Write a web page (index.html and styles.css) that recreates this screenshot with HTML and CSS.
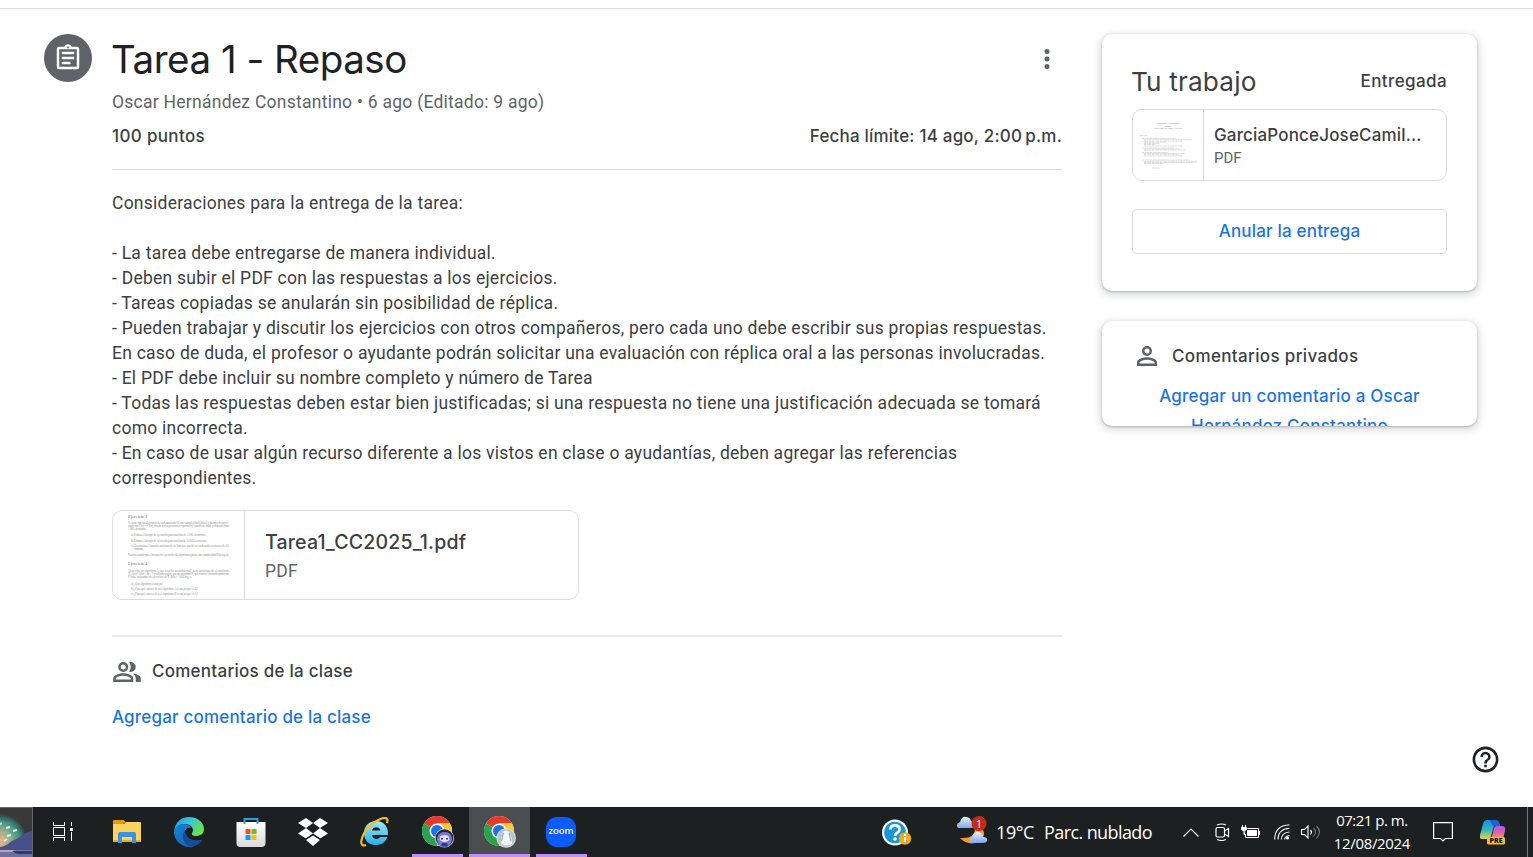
FILE: index.html
```html
<!DOCTYPE html>
<html lang="es">
<head>
<meta charset="utf-8">
<title>Tarea 1 - Repaso</title>
<link rel="stylesheet" href="styles.css">
</head>
<body>
<div class="page">
  <div class="topline"></div>
  <main class="assignment">
    <div class="badge"><svg width="30" height="30" viewBox="0 0 24 24" fill="#fff"><path d="M7 15h7v2H7zm0-4h10v2H7zm0-4h10v2H7zm12-4h-4.180C14.400 1.840 13.300 1 12 1s-2.400.840-2.820 2H5a2 2 0 0 0-2 2v14a2 2 0 0 0 2 2h14a2 2 0 0 0 2-2V5a2 2 0 0 0-2-2zm-7-.250a.750.750 0 0 1 0 1.500.750.750 0 0 1 0-1.500zM19 19H5V5h14v14z"/></svg></div>
    <article class="content">
      <header class="head">
        <h1 class="title">Tarea 1 - Repaso</h1>
        <svg class="more" width="30" height="30" viewBox="0 0 24 24" fill="#5f6368"><path d="M12 8a2 2 0 1 0 0-4 2 2 0 0 0 0 4zm0 2a2 2 0 1 0 0 4 2 2 0 0 0 0-4zm0 6a2 2 0 1 0 0 4 2 2 0 0 0 0-4z"/></svg>
      </header>
      <div class="byline">Oscar Hernández Constantino • 6 ago (Editado: 9 ago)</div>
      <div class="facts"><span class="points">100 puntos</span><span class="due">Fecha límite: 14 ago, 2:00&#8239;p.m.</span></div>
      <div class="description">Consideraciones para la entrega de la tarea:<br><br>- La tarea debe entregarse de manera individual.<br>- Deben subir el PDF con las respuestas a los ejercicios.<br>- Tareas copiadas se anularán sin posibilidad de réplica.<br>- Pueden trabajar y discutir los ejercicios con otros compañeros, pero cada uno debe escribir sus propias respuestas.<br>En caso de duda, el profesor o ayudante podrán solicitar una evaluación con réplica oral a las personas involucradas.<br>- El PDF debe incluir su nombre completo y número de Tarea<br>- Todas las respuestas deben estar bien justificadas; si una respuesta no tiene una justificación adecuada se tomará<br>como incorrecta.<br>- En caso de usar algún recurso diferente a los vistos en clase o ayudantías, deben agregar las referencias<br>correspondientes.</div>
      <div class="file">
        <svg class="thumb" width="131" height="88" viewBox="0 0 131 88">
          <g class="thumb-text">
            <text class="thumb-bold" x="15" y="6.500" textLength="19">Ejercicio 3</text>
            <text x="15" y="13" textLength="101">Se tiene una un algoritmo de ordenamiento O con complejidad O(f(n)) y tiempo de proce-</text>
            <text x="15" y="16" textLength="101">samiento T(n) = c f(n), donde f(n) representa la operación, cuando se mide y ordenar listas</text>
            <text x="15" y="19" textLength="18">1 000 elementos.</text>
            <text x="18" y="25.200" textLength="75">a) Estima el tiempo de ejecución para una lista de 5 000 elementos.</text>
            <text x="18" y="30.500" textLength="76">b) Estima el tiempo de ejecución para una lista de 10 000 elementos.</text>
            <text x="18" y="35.500" textLength="98">c) Determina el tamaño máximo de la lista que puede ser ordenada en menos de 60</text>
            <text x="21.500" y="38.800" textLength="9">minutos.</text>
            <text x="15" y="44.500" textLength="101">Puedes asumir que el tiempo de ejecución del algoritmo g tiene una complejidad O(n log n).</text>
            <text class="thumb-bold" x="15" y="54" textLength="19">Ejercicio 4</text>
            <text x="15" y="60.500" textLength="101">Tienes que un algoritmo A, que resuelve un problema P, tiene un tiempo de ejecución de</text>
            <text x="15" y="63.500" textLength="101">T_A(n) = 10n² + 5n + 2 y además sugiere que un algoritmo B, que resuelve el mismo problema</text>
            <text x="15" y="66.500" textLength="64">P, tiene un tiempo de ejecución de T_B(n) = 50 n log₂ n.</text>
            <text x="18" y="73.500" textLength="32">a) ¿Qué algoritmo es mejor?</text>
            <text x="18" y="78.800" textLength="67">b) ¿Para qué valores de n el algoritmo A es mejor que el B?</text>
            <text x="18" y="84.200" textLength="67">c) ¿Para qué valores de n el algoritmo B es mejor que el A?</text>
          </g>
        </svg>
        <div class="file-info"><div class="file-name">Tarea1_CC2025_1.pdf</div><div class="file-type">PDF</div></div>
      </div>
      <section class="comments">
        <div class="comments-head">
          <svg class="people" width="30" height="30" viewBox="0 0 24 24" fill="#5f6368"><path d="M15 8c0-1.420-.5-2.730-1.330-3.760.42-.14.86-.24 1.330-.24a4 4 0 0 1 0 8c-.43 0-.84-.09-1.230-.21l-.1-.03A5.980 5.980 0 0 0 15 8zm1.660 5.130C18.030 14.060 19 15.320 19 17v3h4v-3c0-2.180-3.580-3.470-6.340-3.870zM9 6a2 2 0 1 0 0 4 2 2 0 0 0 0-4m0-2a4 4 0 1 1 0 8 4 4 0 0 1 0-8zm0 11c-2.690 0-5.770 1.280-6 2.010V18h12v-.99c-.2-.72-3.300-2.010-6-2.010m0-2c2.670 0 8 1.340 8 4v3H1v-3c0-2.660 5.330-4 8-4z"/></svg>
          <h2 class="comments-title">Comentarios de la clase</h2>
        </div>
        <a class="link">Agregar comentario de la clase</a>
      </section>
    </article>
    <aside class="side">
      <section class="card work">
        <div class="work-head"><h2 class="work-title">Tu trabajo</h2><span class="status">Entregada</span></div>
        <div class="upload">
          <svg class="thumb" width="70" height="70" viewBox="0 0 70 70">
            <g class="thumb-text thumb-head" text-anchor="middle">
              <text x="35" y="13.500" textLength="22">Complejidad Computacional</text>
              <text class="thumb-bold" x="35" y="16.700" textLength="7">Tarea 1</text>
              <text x="35" y="19.400" textLength="28">García Ponce José Camilo 319210536</text>
            </g>
            <g class="thumb-lines" fill="none">
              <path d="M7 25.500h7M9 28.500h34M11 29.700h48M11 31.200h39M11 32.200h22M11 33.500h16M11 34.500h12M11 36h39M9 38h31M11 39h36M11 40h41"/>
              <path d="M9 42.500h26M11 43.500h41M11 44.700h36M11 46h39M9 50h46M11 51.300h53M11 52.500h52M11 53.500h20M19 58h8"/>
            </g>
          </svg>
          <div class="upload-info"><div class="upload-name">GarciaPonceJoseCamil...</div><div class="upload-type">PDF</div></div>
        </div>
        <button class="undo">Anular la entrega</button>
      </section>
      <section class="card private">
        <div class="private-head">
          <svg class="person" width="30" height="30" viewBox="0 0 24 24" fill="#5f6368"><path d="M12 6a2 2 0 1 1 0 4 2 2 0 0 1 0-4m0 9c2.700 0 5.800 1.290 6 2v1H6v-.99c.2-.72 3.300-2.010 6-2.010m0-11a4 4 0 1 0 0 8 4 4 0 0 0 0-8zm0 9c-2.670 0-8 1.340-8 4v3h16v-3c0-2.660-5.330-4-8-4z"/></svg>
          <h2 class="private-title">Comentarios privados</h2>
        </div>
        <a class="private-link">Agregar un comentario a Oscar<br>Hernández Constantino</a>
      </section>
    </aside>
  </main>
  <svg class="help" width="31" height="31" viewBox="0 0 24 24" fill="#202124"><path d="M11 18h2v-2h-2v2zm1-16a10 10 0 1 0 0 20 10 10 0 0 0 0-20zm0 18a8 8 0 1 1 0-16 8 8 0 0 1 0 16zm0-14a4 4 0 0 0-4 4h2a2 2 0 1 1 4 0c0 2-3 1.750-3 5h2c0-2.250 3-2.500 3-5a4 4 0 0 0-4-4z"/></svg>
</div>
<footer class="taskbar">
  <svg class="search-art" width="33" height="50" viewBox="0 0 33 50">
    <defs><radialGradient id="sky" cx="0" cy="34" r="27" gradientUnits="userSpaceOnUse"><stop offset="0" stop-color="#ffb08a"/><stop offset=".4" stop-color="#8fb08e"/><stop offset=".75" stop-color="#3b8e80"/><stop offset="1" stop-color="#373b3b"/></radialGradient></defs>
    <path fill="#383838" d="M0 0h33v50H0z"/><circle cx="0" cy="32" r="26" fill="url(#sky)"/>
    <path d="M0 40c8-1 9-5 14-7 6-2 10-8 19-9v20H0z" fill="#47508a"/><path d="M0 43h33v7H0z" fill="#6d709c"/><path d="M0 43h13l4 2H0z" fill="#c2a0b5"/><path d="M12 44h21v3H17z" fill="#303a68"/>
    <path d="M6 21l4-1M13 24l4-1M7 29l4-1M4 34l3-2M0 17l2-1" stroke="#d9fff1" stroke-width="2"/>
    <path d="M0 .5h32.500V50" fill="none" stroke="#666"/>
  </svg>
  <div class="app task-view"><svg width="22" height="22" viewBox="0 0 22 22" fill="none" stroke="#fff"><path d="M1.500 1v3.500h11V1M1.500 20v-3.500h11V20M1.500 6.500h11v8h-11zM19.500 1v4M19.500 11v9"/><path d="M18 7h3v3h-3z" fill="#fff" stroke="none"/></svg></div>
  <div class="app"><svg width="28" height="24" viewBox="0 0 28 24"><path d="M0 1q0-1 1-1h10l2 3h-2l-2 2H0z" fill="#e49c05"/><path d="M0 4h11l2-2h14q1 0 1 1v18q0 1-1 1H0z" fill="#ffd45c"/><path d="M0 20h28v1q0 1-1 1H0z" fill="#e8ad27"/><path d="M5 23V14q0-2 2-2h14q2 0 2 2v9h-4v-6H9v6z" fill="#3b94dc"/></svg></div>
  <div class="app"><svg width="30" height="30" viewBox="0 0 30 30">
    <defs><linearGradient id="edgeTop" x1="0" y1="0" x2="1" y2=".5"><stop offset="0" stop-color="#2793dc"/><stop offset=".5" stop-color="#33c4e0"/><stop offset="1" stop-color="#6ce04b"/></linearGradient><linearGradient id="edgeLow" x1="0" y1="0" x2="1" y2="1"><stop offset="0" stop-color="#1687db"/><stop offset="1" stop-color="#0d58a8"/></linearGradient></defs>
    <path d="M0 15C1 5 7 0 15 0c9 0 15 6 15 12 0 5-4 7-8 7-3 0-5-1-4-3 3-4-1-9-7-9C5 7 1 10 0 15z" fill="url(#edgeTop)"/>
    <path d="M0 15C0 10 5 7 10 7c3 0 6 1 7 4-5-1-7 3-6 7 1 6 7 9 12 7 2-1 3-2 4-1-3 4-8 6-12 6C7 30 0 23 0 15z" fill="url(#edgeLow)"/>
    <path d="M11 13c-4 4-3 12 4 16 6 1 10-2 13-5 0-2-2-1-4-1-6 1-12-2-13-10z" fill="#124d96"/></svg></div>
  <div class="app"><svg width="30" height="30" viewBox="0 0 30 30"><defs><linearGradient id="bag" x2="0" y2="1"><stop stop-color="#fff"/><stop offset="1" stop-color="#d8dadc"/></linearGradient></defs><path d="M.5 5h29v21q0 4-4 4h-21q-4 0-4-4z" fill="url(#bag)"/><path d="M8.500 7V2h13v5" fill="none" stroke="#27a3df" stroke-width="2"/><path d="M9.500 12h5v5h-5z" fill="#f25022"/><path d="M15.500 12h5v5h-5z" fill="#7fba00"/><path d="M9.500 18h5v5h-5z" fill="#00a4ef"/><path d="M15.500 18h5v5h-5z" fill="#ffb900"/></svg></div>
  <div class="app"><svg width="30" height="28" viewBox="0 0 30 28" fill="#fff"><path d="M8 0l7 5-7 5-8-5zM22 0l8 5-8 5-7-5zM8 10l7 5.500-7 5-8-5zM22 10l8 5.500-8 5-7-5zM15 17.500l7 4.500-7 6-7-6z"/><path d="M7 21.500l8-5 8 5" fill="none" stroke="#1c2020"/></svg></div>
  <div class="app"><svg width="30" height="30" viewBox="0 0 30 30"><defs><linearGradient id="ieBlue" x2="0" y2="1"><stop stop-color="#9be8fb"/><stop offset="1" stop-color="#28aee4"/></linearGradient></defs><path d="M28 18H12c.5 4 6 5.500 8 2h7.500C25 26 21 28 15.500 28 8 28 4 23 4 16S9 4 16 4c8 0 12.500 6 12 14zM12 13.500h8.500c-.5-4.500-8-4.500-8.500 0z" fill="url(#ieBlue)" fill-rule="evenodd"/><path d="M27 6C30-3 18 1 9 10 1 18-2 31 6 28" fill="none" stroke="#f4bd18" stroke-width="2.200"/></svg></div>
  <div class="app app-open app-first"><svg width="32" height="32" viewBox="0 0 32 32">
    <defs><g id="chrome"><circle cx="15" cy="15" r="15" fill="#fff"/><path d="M15 15L2 7.500A15 15 0 0 1 28 7.500H15z" fill="#e33b2e"/><path d="M15 15L2 7.500A15 15 0 0 0 15 30l6.500-11.250z" fill="#2ba24c"/><path d="M15 7.500h13A15 15 0 0 1 15 30l6.500-11.250z" fill="#fcc934"/><circle cx="15" cy="15" r="7.500" fill="#fff"/><circle cx="15" cy="15" r="6" fill="#1a73e8"/></g></defs>
    <use href="#chrome"/><circle cx="22.500" cy="22" r="9.500" fill="#d5d5e4"/><circle cx="22.500" cy="22" r="8.800" fill="#27253e"/><path d="M15 24q0-8 7.500-8t7.500 8l-2 5q-5 4-11 0z" fill="#6f7bda"/><path d="M18.500 20q4-2 8 0l1 4q-5 4-10 0z" fill="#e9dff3"/><path d="M19 22h2v1.500h-2zM24 22h2v1.500h-2z" fill="#3b3c9b"/><path d="M20 27h5l1 3q-3 1-7 0z" fill="#343a88"/></svg></div>
  <div class="app app-open app-active"><svg width="32" height="32" viewBox="0 0 32 32"><use href="#chrome"/><circle cx="22.200" cy="22" r="9.800" fill="#d7dde2"/><circle cx="22.200" cy="22" r="8.800" fill="#b9c6c4"/><path d="M19.500 15.500q3-2 5 0l3 6 .5 6q-5 4-11 0l.5-6z" fill="#f3f5fa"/><path d="M19.500 17l-2 8M25 17l2 8" stroke="#8ba0bb"/></svg></div>
  <div class="app app-open"><div class="zoom-logo">zoom</div></div>
  <div class="tray">
    <svg class="support" width="30" height="28" viewBox="0 0 30 28"><circle cx="13" cy="13.500" r="13" fill="#fff"/><circle cx="13" cy="13.500" r="10.800" fill="#1698d5"/><path d="M8.500 10.500Q8.500 6.500 13 6.500t4.500 4q0 2-2.500 3.500-2 1-2 3" fill="none" stroke="#fff" stroke-width="2.800"/><circle cx="13" cy="20" r="1.800" fill="#fff"/><circle cx="23" cy="19.500" r="6.200" fill="#f0ab20"/><path d="M22 18h2v5h-2zM22 15h2v2h-2z" fill="#fff"/></svg>
    <svg class="weather-icon" width="32" height="30" viewBox="0 0 32 30"><defs><linearGradient id="cloud" x2="0" y2="1"><stop stop-color="#e6effd"/><stop offset="1" stop-color="#7da8e8"/></linearGradient></defs><path d="M18 10c3 7-2 13-14 12 5 6 14 7 20 3 7-5 5-15-6-15z" fill="#f49a27"/><path d="M2 12q-3-4 2-6Q6 0 10 1q4 0 5 4 5 1 4 4 0 3-4 3z" fill="url(#cloud)"/><path d="M15 27q-4-4 1-6 2-6 7-5 4 1 4 5 5 0 4 4-1 2-4 2z" fill="url(#cloud)"/><circle cx="23" cy="7.500" r="7.500" fill="#c42b1c"/><text class="alert-count" x="23" y="12" text-anchor="middle">1</text></svg>
    <span class="temp">19°C</span><span class="sky">Parc. nublado</span>
    <svg class="chevron" width="16" height="9" viewBox="0 0 16 9" fill="none" stroke="#fff" stroke-width="1.200"><path d="M.5 8.500L8 1l7.500 7.500"/></svg>
    <svg class="cam" width="15" height="18" viewBox="0 0 15 18" fill="none" stroke="#fff" stroke-width="1.200"><rect x="1" y="4.500" width="8.500" height="9.500" rx="1.500"/><path d="M9.500 8l4-2.500v8L9.500 11M2 2q4.500-2 9 0M2 16.500q4.500 2 9 0"/></svg>
    <svg class="battery" width="20" height="14" viewBox="0 0 20 14" fill="none" stroke="#fff"><path d="M6.500 3.500h11v9h-13V9M18.500 6v4"/><path d="M6.500 5.500h9v5h-9z" fill="#fff"/><path d="M1.500 0v2.500M4.500 0v2.500"/><path d="M.5 2.500h5v2Q3 7.500.5 4.500zM3 6v3.500h1.500" fill="#fff"/></svg>
    <svg class="wifi" width="16" height="16" viewBox="0 0 16 16" fill="none" stroke="#eee" stroke-width="1.100"><path d="M.7 15.500Q.7 1.500 15.500.7M4 15.500Q4 5 15.500 4.200M7.300 15.500Q7.800 8.500 15.500 8M10.500 15.500q.5-3.500 5-4"/><circle cx="13.500" cy="14" r="1.500" fill="#fff" stroke="none"/></svg>
    <svg class="sound" width="21" height="16" viewBox="0 0 21 16" fill="none" stroke="#fff" stroke-width="1.100"><path d="M.6 5.500h2.900l3.500-3.500v12l-3.500-3.500H.6z"/><path d="M9.500 6q2 2 0 4.500"/><path d="M12.500 4q4 4 0 8.500M15.500 2q6 6 0 12.500" stroke="#777"/></svg>
    <div class="clock"><span class="time">07:21 p. m.</span><span class="date">12/08/2024</span></div>
    <svg class="notes" width="20" height="20" viewBox="0 0 20 20" fill="none" stroke="#fff" stroke-width="1.200"><path d="M.6.600h18.800v15.900h-7l-2.400 2.500-2.400-2.500h-7z"/></svg>
    <svg class="copilot" width="26" height="25" viewBox="0 0 26 25"><defs><linearGradient id="coA" x2="0" y2="1"><stop stop-color="#168de3"/><stop offset=".5" stop-color="#2bb4c4"/><stop offset="1" stop-color="#e4d447"/></linearGradient><linearGradient id="coB" x2="0" y2="1"><stop stop-color="#a45cf0"/><stop offset=".5" stop-color="#e25fa4"/><stop offset="1" stop-color="#f8a05e"/></linearGradient></defs><path d="M7 0h9q3 0 4 6h-6l-3 10q-1 3-4 3H2q-3 0-2-4L3 4q1-4 4-4z" fill="url(#coA)"/><path d="M10 0h6q3 0 4 6h-6q-2 0-4-6z" fill="#1765cf"/><path d="M16 6h6q4 0 3 5l-2 8H9q2 0 3-3l2-8q1-2 2-2z" fill="url(#coB)"/><rect x="7" y="17" width="18" height="7.500" rx="1.500" fill="#fdc016"/><text class="pre" x="16" y="23.200" text-anchor="middle" textLength="13">PRE</text></svg>
    <span class="desktop-edge"></span>
  </div>
</footer>
</body>
</html>
```
FILE: styles.css
```css
body {
  margin: 0;
  height: 857px;
  overflow: hidden;
  display: flex;
  flex-direction: column;
  background: #fff;
  color: #3c4043;
  font-family: Inter, sans-serif;
}
h1, h2 { margin: 0; font-weight: 400; }
svg { display: block; flex: none; }

.page { position: relative; height: 807px; }
.topline { height: 8px; border-bottom: 1px solid #dadce0; }
.assignment {
  display: grid;
  grid-template-columns: 48px 950px 375px;
  padding: 25px 0 0 44px;
}
.badge {
  display: flex;
  align-items: center;
  justify-content: center;
  width: 48px;
  height: 48px;
  border-radius: 50%;
  background: #5f6368;
}
.content { margin-left: 20px; width: 950px; }
.side { margin-left: 60px; width: 375px; }

.head { display: flex; justify-content: space-between; align-items: center; height: 50px; }
.title { margin-left: -1px; font-size: 38.5px; font-weight: 370; line-height: 50px; letter-spacing: -.48px; color: #202124; }
.byline, .description, .file-type {
  font: 17.5px/25px Roboto, sans-serif;
  letter-spacing: .243px;
}
.byline { margin-top: 6px; color: #5f6368; letter-spacing: .26px; }
.facts, .file-name, .status, .comments-title, .link, .undo, .upload-name, .private-title, .private-link {
  font-size: 17px;
  font-weight: 500;
  line-height: 25px;
}
.facts {
  display: flex;
  justify-content: space-between;
  margin-top: 9px;
  padding-bottom: 20px;
  border-bottom: 1px solid #dadce0;
}
.points { letter-spacing: .35px; }
.due { letter-spacing: .2px; }
.description { margin-top: 21px; white-space: nowrap; }

.file {
  display: flex;
  box-sizing: border-box;
  width: 467px;
  height: 90px;
  margin-top: 19px;
  border: 1px solid #dadce0;
  border-radius: 10px;
}
.thumb { border-right: 1px solid #dadce0; }
.thumb-text { font: 3.3px "Liberation Serif", serif; fill: #999; }
.thumb-bold { font-weight: 700; font-size: 4.2px; }
.thumb-head { font-size: 2.4px; }
.thumb-head .thumb-bold { font-size: 2.800px; }
.thumb-lines { stroke: #ccc; stroke-width: .7; stroke-dasharray: 2.200 .5 1.200 .4 3 .5; }
.file-info { display: flex; flex-direction: column; justify-content: center; padding-left: 20px; }
.file-name { font-size: 19.5px; line-height: 30px; letter-spacing: .19px; }
.file-type { margin-top: 2px; color: #5f6368; }

.comments { margin-top: 35px; padding-top: 19px; border-top: 2px solid #e8eaed; }
.comments-head { display: flex; align-items: center; gap: 10px; height: 30px; }
.people { margin-top: 2px; }
.comments-title { letter-spacing: .26px; }
.link { display: block; margin-top: 19px; color: #1a73e8; letter-spacing: .19px; }

.card {
  box-sizing: border-box;
  padding: 0 30px;
  border-radius: 10px;
  background: #fff;
  box-shadow: 0 1px 2.500px rgba(60, 64, 67, .3), 0 2.500px 7.500px 2.500px rgba(60, 64, 67, .15);
}
.work { height: 257px; padding-top: 27px; }
.work-head { display: flex; justify-content: space-between; align-items: center; height: 40px; }
.work-title { margin: 2px 0 0 -1px; font-size: 26.2px; font-weight: 370; line-height: 40px; letter-spacing: .15px; }
.status { letter-spacing: .4px; }
.upload {
  display: flex;
  box-sizing: border-box;
  height: 72px;
  margin-top: 8px;
  border: 1px solid #dadce0;
  border-radius: 10px;
}
.upload-info { display: flex; flex-direction: column; justify-content: center; padding-left: 10px; }
.upload-name { letter-spacing: .16px; }
.upload-type { font: 15px/20px Roboto, sans-serif; color: #5f6368; }
.undo {
  display: block;
  width: 100%;
  height: 45px;
  margin-top: 28px;
  padding: 0;
  border: 1px solid #dadce0;
  border-radius: 5px;
  background: #fff;
  color: #1a73e8;
  font-family: inherit;
  letter-spacing: .18px;
}
.private { height: 105px; margin-top: 30px; padding-top: 20px; overflow: hidden; }
.private-head { display: flex; align-items: center; gap: 10px; height: 30px; }
.private-title { letter-spacing: .35px; }
.private-link {
  display: block;
  margin-top: 10px;
  color: #1a73e8;
  line-height: 30px;
  letter-spacing: .22px;
  text-align: center;
}
.help { position: absolute; left: 1470px; top: 744.4px; }

.taskbar {
  display: flex;
  height: 50px;
  background: #1c2020;
  color: #fff;
  font-family: "Open Sans", "Noto Sans", sans-serif;
}
.app { display: flex; align-items: center; justify-content: center; width: 62px; }
.task-view { width: 60px; padding-right: 3px; }
.app-open { background: linear-gradient(#bd92f2, #bd92f2) center bottom / 51px 3px no-repeat; }
.app-first { width: 63px; padding-left: 1px; box-sizing: border-box; background-position: 6px bottom; }
.app-active { width: 61px; background: linear-gradient(#bd92f2, #bd92f2) center bottom / 61px 3px no-repeat #4b4e4e; }
.zoom-logo {
  width: 30px;
  height: 30px;
  border-radius: 11px;
  background: #0b5cff;
  font: 600 9.500px/28px "Open Sans", sans-serif;
  letter-spacing: -.1px;
  text-align: center;
}
.tray { display: flex; align-items: center; flex: 1; }
.support { margin-left: 290px; margin-top: 2px; }
.weather-icon { margin-left: 44px; margin-top: -2px; }
.alert-count { font-size: 11.500px; fill: #fff; }
.temp, .sky { font-size: 18px; white-space: nowrap; }
.temp { margin-left: 8px; letter-spacing: -.4px; }
.sky { margin-left: 10px; letter-spacing: -.6px; }
.chevron { margin-left: 31px; }
.cam { margin-left: 16px; }
.battery { margin-left: 11px; }
.wifi { margin-left: 13px; }
.sound { margin-left: 11px; }
.clock { display: flex; flex-direction: column; align-items: center; width: 80px; margin-left: 10px; font-size: 15px; line-height: 23px; white-space: nowrap; }
.time { letter-spacing: -.5px; }
.date { letter-spacing: -.35px; }
.notes { margin-left: 21px; }
.copilot { margin-left: 27px; }
.pre { font: 800 7px "Open Sans", sans-serif; fill: #111; }
.desktop-edge { width: 1px; height: 50px; margin-left: auto; margin-right: 5px; background: #777; }
```
